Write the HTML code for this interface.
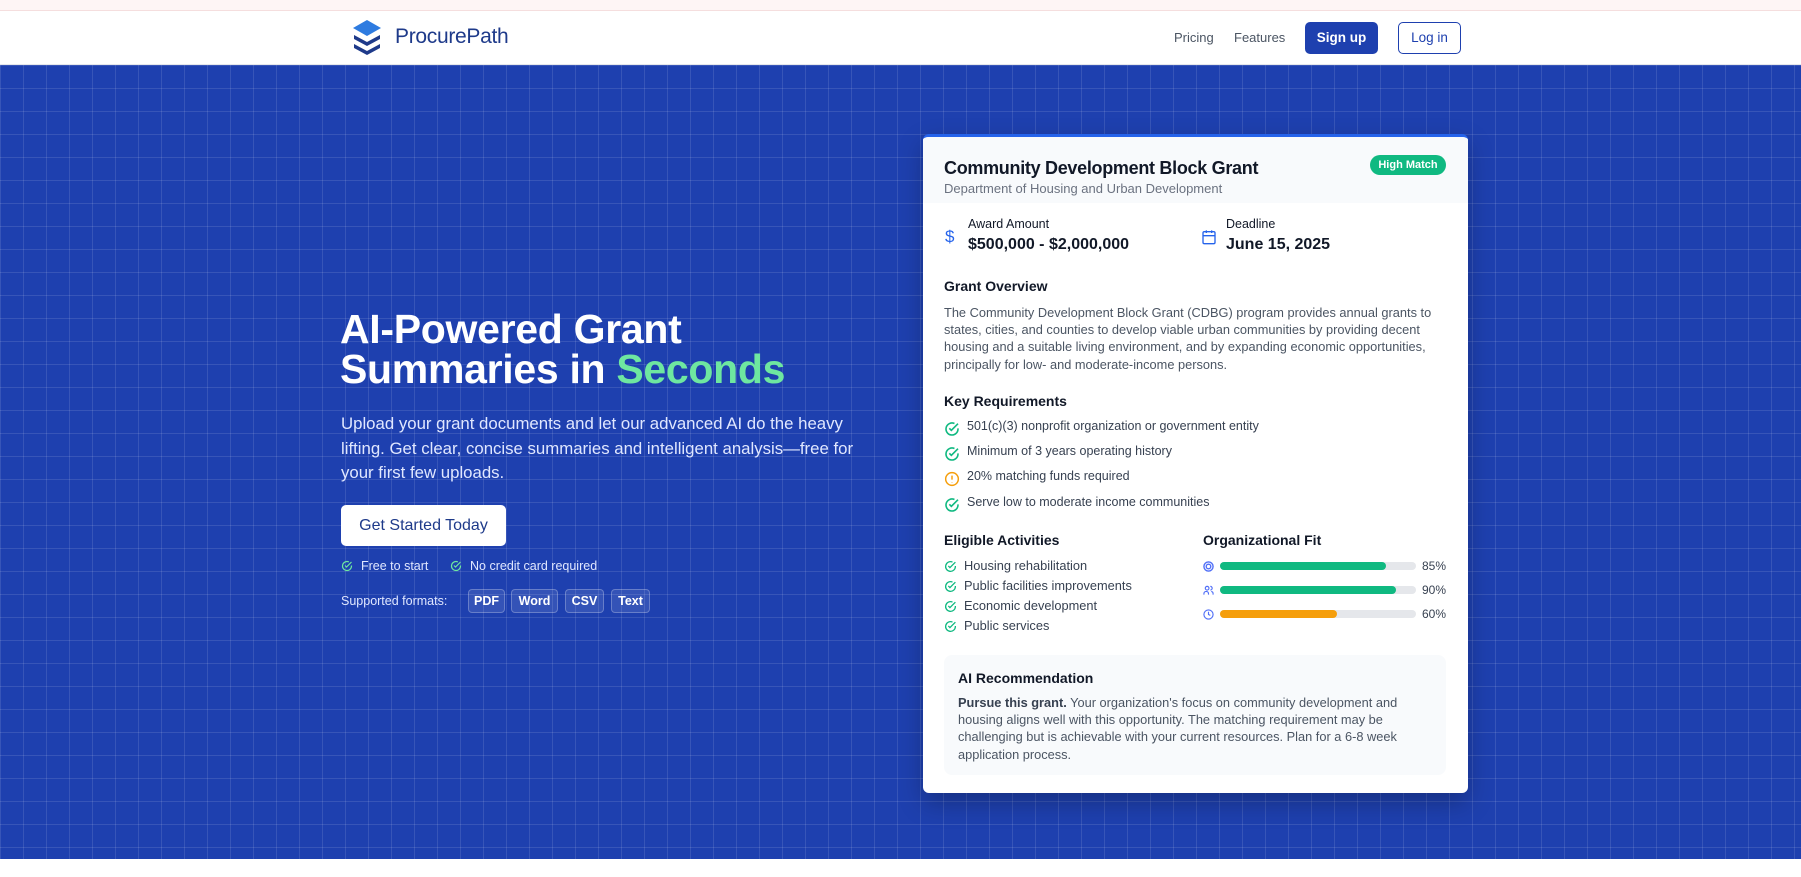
<!DOCTYPE html>
<html><head><meta charset="utf-8">
<style>
*{margin:0;padding:0;box-sizing:border-box}
body{width:1801px;height:877px;overflow:hidden;font-family:"Liberation Sans",sans-serif;background:#fff;position:relative}
.abs{position:absolute;white-space:nowrap}
.top{position:absolute;left:0;top:0;width:1801px;height:11px;background:#fef5f5;border-bottom:1px solid #f5dede}
.nav{position:absolute;left:0;top:12px;width:1801px;height:53px;background:#fff;border-bottom:1px solid #e5e7eb}
.hero{position:absolute;left:0;top:65px;width:1801px;height:794px;background-color:#1e40af;
background-image:linear-gradient(rgba(255,255,255,.11) 1px,transparent 1px),linear-gradient(90deg,rgba(255,255,255,.11) 1px,transparent 1px);background-size:23px 23px}
.card{position:absolute;left:923px;top:134px;width:545px;height:659px;background:#fff;border-radius:6px;border-top:3px solid #2563eb;overflow:hidden;box-shadow:0 10px 25px rgba(0,0,0,.25)}
.chead{position:absolute;left:0;top:0;width:545px;height:66px;background:#f8fafc}
.t{color:#111827;font-weight:bold}
.g{color:#4b5563}
</style></head><body>
<div class="top"></div>
<div class="nav"></div>
<svg class="abs" style="left:353px;top:20px" width="28" height="36" viewBox="0 0 28 36">
<path d="M14 0 L28 8 L14 16 L0 8Z" fill="#2e7be0"/>
<path d="M1 15 L14 22 L27 15 L27 19 L14 26 L1 19Z" fill="#1e3a8a"/>
<path d="M1 24 L14 31 L27 24 L27 28 L14 35 L1 28Z" fill="#1e3a8a"/>
</svg>
<div class="abs" style="left:395px;top:25px;font-size:21px;color:#1e3a8a;letter-spacing:-0.3px">ProcurePath</div>
<div class="abs" style="left:1174px;top:30px;font-size:13px;color:#4b5563">Pricing</div>
<div class="abs" style="left:1234px;top:30px;font-size:13px;color:#4b5563">Features</div>
<div class="abs" style="left:1305px;top:22px;width:73px;height:32px;background:#1e40af;border-radius:5px;color:#fff;font-size:13.5px;font-weight:bold;text-align:center;line-height:32px">Sign up</div>
<div class="abs" style="left:1398px;top:22px;width:63px;height:32px;border:1.5px solid #1e40af;border-radius:5px;color:#1e40af;font-size:13.5px;text-align:center;line-height:29px">Log in</div>

<div class="hero"></div>
<div class="abs" style="left:340px;top:309px;font-size:41px;font-weight:bold;color:#fff;line-height:40px;letter-spacing:-0.3px">AI-Powered Grant<br>Summaries in <span style="color:#6ee7a0">Seconds</span></div>
<div class="abs" style="left:341px;top:412px;font-size:16.8px;color:#e0e7ff;line-height:24.5px">Upload your grant documents and let our advanced AI do the heavy<br>lifting. Get clear, concise summaries and intelligent analysis—free for<br>your first few uploads.</div>
<div class="abs" style="left:341px;top:505px;width:165px;height:41px;background:#fff;border-radius:5px;color:#1e3a8a;font-size:16px;text-align:center;line-height:41px">Get Started Today</div>
<svg class="abs" style="left:341px;top:560px" width="12" height="12" viewBox="0 0 24 24" fill="none" stroke="#6ee7a0" stroke-width="2.4"><path d="M21 11v1a9 9 0 1 1-5.3-8.2"/><path d="M8 11l3 3 10-10"/></svg>
<div class="abs" style="left:361px;top:559px;font-size:12.5px;color:#e0e7ff">Free to start</div>
<svg class="abs" style="left:450px;top:560px" width="12" height="12" viewBox="0 0 24 24" fill="none" stroke="#6ee7a0" stroke-width="2.4"><path d="M21 11v1a9 9 0 1 1-5.3-8.2"/><path d="M8 11l3 3 10-10"/></svg>
<div class="abs" style="left:470px;top:559px;font-size:12.5px;color:#e0e7ff">No credit card required</div>
<div class="abs" style="left:341px;top:594px;font-size:12.5px;color:#e0e7ff">Supported formats:</div>
<div class="abs" style="left:468px;top:589px;width:37px;height:24px;border:1px solid rgba(255,255,255,.25);background:rgba(255,255,255,.1);border-radius:4px;color:#fff;font-size:12.5px;font-weight:bold;text-align:center;line-height:22px">PDF</div>
<div class="abs" style="left:511px;top:589px;width:47px;height:24px;border:1px solid rgba(255,255,255,.25);background:rgba(255,255,255,.1);border-radius:4px;color:#fff;font-size:12.5px;font-weight:bold;text-align:center;line-height:22px">Word</div>
<div class="abs" style="left:565px;top:589px;width:39px;height:24px;border:1px solid rgba(255,255,255,.25);background:rgba(255,255,255,.1);border-radius:4px;color:#fff;font-size:12.5px;font-weight:bold;text-align:center;line-height:22px">CSV</div>
<div class="abs" style="left:611px;top:589px;width:39px;height:24px;border:1px solid rgba(255,255,255,.25);background:rgba(255,255,255,.1);border-radius:4px;color:#fff;font-size:12.5px;font-weight:bold;text-align:center;line-height:22px">Text</div>

<div class="card">
<div class="chead"></div>
<div class="abs t" style="left:21px;top:21px;font-size:18px;letter-spacing:-0.3px">Community Development Block Grant</div>
<div class="abs" style="left:21px;top:44px;font-size:13px;color:#6b7280">Department of Housing and Urban Development</div>
<div class="abs" style="left:447px;top:18px;width:76px;height:20px;background:#10b981;border-radius:10px;color:#fff;font-size:11px;font-weight:bold;text-align:center;line-height:20px">High Match</div>

<div class="abs" style="left:22px;top:90px;font-size:17px;color:#2563eb">$</div>
<div class="abs" style="left:45px;top:80px;font-size:12.5px;color:#111827">Award Amount</div>
<div class="abs t" style="left:45px;top:99px;font-size:16px">$500,000 - $2,000,000</div>
<svg class="abs" style="left:278px;top:92px" width="16" height="16" viewBox="0 0 24 24" fill="none" stroke="#2563eb" stroke-width="2"><rect x="3" y="4" width="18" height="18" rx="2"/><path d="M3 10h18M8 2v4M16 2v4"/></svg>
<div class="abs" style="left:303px;top:80px;font-size:12.5px;color:#111827">Deadline</div>
<div class="abs t" style="left:303px;top:99px;font-size:16px">June 15, 2025</div>

<div class="abs t" style="left:21px;top:141px;font-size:14px">Grant Overview</div>
<div class="abs g" style="left:21px;top:167px;font-size:12.8px;line-height:17.2px">The Community Development Block Grant (CDBG) program provides annual grants to<br>states, cities, and counties to develop viable urban communities by providing decent<br>housing and a suitable living environment, and by expanding economic opportunities,<br>principally for low- and moderate-income persons.</div>

<div class="abs t" style="left:21px;top:256px;font-size:14px">Key Requirements</div>
<svg class="abs" style="left:21px;top:284px" width="16" height="16" viewBox="0 0 24 24" fill="none" stroke="#10b981" stroke-width="2.4"><path d="M21 11v1a9 9 0 1 1-5.3-8.2"/><path d="M8 11l3 3 10-10"/></svg>
<div class="abs" style="left:44px;top:282px;font-size:12.5px;color:#374151">501(c)(3) nonprofit organization or government entity</div>
<svg class="abs" style="left:21px;top:309px" width="16" height="16" viewBox="0 0 24 24" fill="none" stroke="#10b981" stroke-width="2.4"><path d="M21 11v1a9 9 0 1 1-5.3-8.2"/><path d="M8 11l3 3 10-10"/></svg>
<div class="abs" style="left:44px;top:307px;font-size:12.5px;color:#374151">Minimum of 3 years operating history</div>
<svg class="abs" style="left:21px;top:334px" width="16" height="16" viewBox="0 0 24 24" fill="none" stroke="#f59e0b" stroke-width="2.2"><circle cx="12" cy="12" r="9.5"/><path d="M12 7v6M12 16.5v.5"/></svg>
<div class="abs" style="left:44px;top:332px;font-size:12.5px;color:#374151">20% matching funds required</div>
<svg class="abs" style="left:21px;top:360px" width="16" height="16" viewBox="0 0 24 24" fill="none" stroke="#10b981" stroke-width="2.4"><path d="M21 11v1a9 9 0 1 1-5.3-8.2"/><path d="M8 11l3 3 10-10"/></svg>
<div class="abs" style="left:44px;top:358px;font-size:12.5px;color:#374151">Serve low to moderate income communities</div>

<div class="abs t" style="left:21px;top:395px;font-size:14px">Eligible Activities</div>
<svg class="abs" style="left:21px;top:423px" width="13" height="13" viewBox="0 0 24 24" fill="none" stroke="#10b981" stroke-width="2.4"><path d="M21 11v1a9 9 0 1 1-5.3-8.2"/><path d="M8 11l3 3 10-10"/></svg>
<div class="abs" style="left:41px;top:421px;font-size:12.8px;color:#374151">Housing rehabilitation</div>
<svg class="abs" style="left:21px;top:443px" width="13" height="13" viewBox="0 0 24 24" fill="none" stroke="#10b981" stroke-width="2.4"><path d="M21 11v1a9 9 0 1 1-5.3-8.2"/><path d="M8 11l3 3 10-10"/></svg>
<div class="abs" style="left:41px;top:441px;font-size:12.8px;color:#374151">Public facilities improvements</div>
<svg class="abs" style="left:21px;top:463px" width="13" height="13" viewBox="0 0 24 24" fill="none" stroke="#10b981" stroke-width="2.4"><path d="M21 11v1a9 9 0 1 1-5.3-8.2"/><path d="M8 11l3 3 10-10"/></svg>
<div class="abs" style="left:41px;top:461px;font-size:12.8px;color:#374151">Economic development</div>
<svg class="abs" style="left:21px;top:483px" width="13" height="13" viewBox="0 0 24 24" fill="none" stroke="#10b981" stroke-width="2.4"><path d="M21 11v1a9 9 0 1 1-5.3-8.2"/><path d="M8 11l3 3 10-10"/></svg>
<div class="abs" style="left:41px;top:481px;font-size:12.8px;color:#374151">Public services</div>

<div class="abs t" style="left:280px;top:395px;font-size:14px">Organizational Fit</div>
<svg class="abs" style="left:280px;top:424px" width="11" height="11" viewBox="0 0 24 24" fill="none" stroke="#4f6ef7" stroke-width="3"><circle cx="12" cy="12" r="10"/><circle cx="12" cy="12" r="5"/></svg>
<div class="abs" style="left:297px;top:425px;width:196px;height:8px;background:#e5e7eb;border-radius:4px"><div style="width:166px;height:8px;background:#10b981;border-radius:4px"></div></div>
<div class="abs" style="left:499px;top:422px;font-size:12px;color:#374151">85%</div>
<svg class="abs" style="left:280px;top:448px" width="11" height="11" viewBox="0 0 24 24" fill="none" stroke="#4f6ef7" stroke-width="2.5"><circle cx="9" cy="7" r="4"/><path d="M2 21v-2a5 5 0 0 1 10 0v2M16 3a4 4 0 0 1 0 8M22 21v-2a5 5 0 0 0-4-4.9"/></svg>
<div class="abs" style="left:297px;top:449px;width:196px;height:8px;background:#e5e7eb;border-radius:4px"><div style="width:176px;height:8px;background:#10b981;border-radius:4px"></div></div>
<div class="abs" style="left:499px;top:446px;font-size:12px;color:#374151">90%</div>
<svg class="abs" style="left:280px;top:472px" width="11" height="11" viewBox="0 0 24 24" fill="none" stroke="#4f6ef7" stroke-width="2.5"><circle cx="12" cy="12" r="10"/><path d="M12 6v6l4 2"/></svg>
<div class="abs" style="left:297px;top:473px;width:196px;height:8px;background:#e5e7eb;border-radius:4px"><div style="width:117px;height:8px;background:#f59e0b;border-radius:4px"></div></div>
<div class="abs" style="left:499px;top:470px;font-size:12px;color:#374151">60%</div>

<div class="abs" style="left:21px;top:518px;width:502px;height:120px;background:#f8fafc;border-radius:8px"></div>
<div class="abs t" style="left:35px;top:533px;font-size:14px">AI Recommendation</div>
<div class="abs g" style="left:35px;top:557px;font-size:12.8px;line-height:17.2px"><b style="color:#374151">Pursue this grant.</b> Your organization's focus on community development and<br>housing aligns well with this opportunity. The matching requirement may be<br>challenging but is achievable with your current resources. Plan for a 6-8 week<br>application process.</div>
</div>
</body></html>
